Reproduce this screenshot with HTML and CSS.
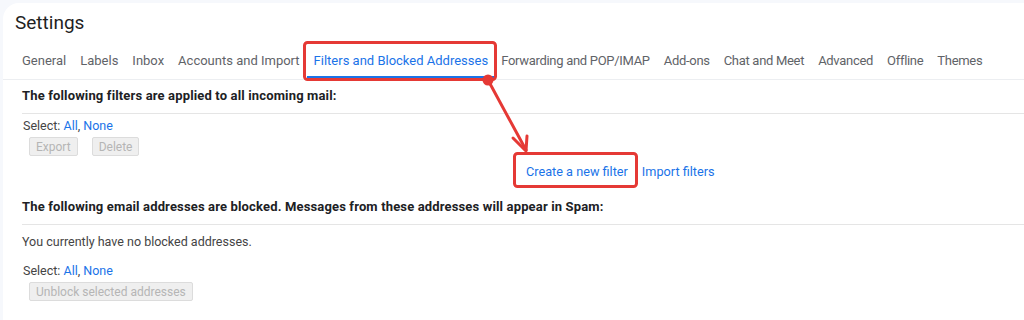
FILE: index.html
```html
<!DOCTYPE html>
<html lang="en">
<head>
    <meta charset="UTF-8">
    <meta name="viewport" content="width=device-width, initial-scale=1.0">
    <title>Settings - Filters and Blocked Addresses</title>
    <link rel="stylesheet" href="styles.css">
</head>
<body>
    <div class="page">
        <div class="panel">
            <h1 class="title">Settings</h1>
            <nav class="tabs">
                <a class="tab">General</a>
                <a class="tab">Labels</a>
                <a class="tab">Inbox</a>
                <a class="tab">Accounts and Import</a>
                <a class="tab active">Filters and Blocked Addresses</a>
                <a class="tab">Forwarding and POP/IMAP</a>
                <a class="tab">Add-ons</a>
                <a class="tab">Chat and Meet</a>
                <a class="tab">Advanced</a>
                <a class="tab">Offline</a>
                <a class="tab">Themes</a>
            </nav>

            <section class="block">
                <h2 class="block-head">The following filters are applied to all incoming mail:</h2>
                <div class="select">Select: <a>All</a>, <a>None</a></div>
                <div class="buttons">
                    <button class="btn" disabled>Export</button>
                    <button class="btn" disabled>Delete</button>
                </div>
                <div class="filter-links">
                    <a>Create a new filter</a>
                    <a>Import filters</a>
                </div>
            </section>

            <section class="block blocked">
                <h2 class="block-head">The following email addresses are blocked. Messages from these addresses will appear in Spam:</h2>
                <p class="empty">You currently have no blocked addresses.</p>
                <div class="select select-low">Select: <a>All</a>, <a>None</a></div>
                <div class="buttons">
                    <button class="btn" disabled>Unblock selected addresses</button>
                </div>
            </section>
        </div>

        <!-- red callouts drawn over the page -->
        <svg class="callouts" width="1024" height="320" viewBox="0 0 1024 320">
            <rect x="304.5" y="42.5" width="191" height="37" rx="3" />
            <rect x="514.5" y="153.5" width="122" height="33" rx="3" />
            <line x1="488" y1="80" x2="526" y2="150" />
            <polyline points="513,138 526,151 527,136" />
            <circle cx="488" cy="80" r="5.5" />
        </svg>
    </div>
</body>
</html>
```

FILE: styles.css
```css
* {
    box-sizing: border-box;
}

body {
    margin: 0;
    background: #f6f8fc;
    font-family: Roboto, "Liberation Sans", Arial, sans-serif;
    color: #202124;
}

.page {
    position: relative;
    width: 1024px;
    height: 320px;
    padding: 3px 0 0 3px;
    overflow: hidden;
}

.panel {
    background: #fff;
    border-radius: 16px 0 0 0;
    height: 100%;
}

.title {
    margin: 0;
    padding: 8px 12px 0;
    font-size: 19px;
    line-height: 24px;
    font-weight: 400;
    color: #1f1f1f;
}

.tabs {
    display: flex;
    padding: 16px 0 0 12px;
    border-bottom: 1px solid #eceef1;
}

.tab {
    padding: 0 7px 5px;
    font-size: 13px;
    line-height: 20px;
    color: #5f6368;
    white-space: nowrap;
    border-bottom: 3px solid transparent;
}

.tab.active {
    padding: 0 6px 5px 7px;
    color: #1a73e8;
    border-bottom-color: #1a73e8;
}

.tab.active ~ .tab {
    letter-spacing: -0.3px;
}

.block {
    margin-left: 19px;
}

.blocked {
    margin-top: 11px;
}

.block-head {
    margin: 0;
    padding: 7px 0 8px;
    font-size: 13px;
    line-height: 18px;
    font-weight: 700;
    letter-spacing: 0.15px;
    color: #202124;
    border-bottom: 1px solid #e5e5e5;
}

.select {
    margin-top: 4px;
    padding-left: 1px;
    font-size: 12.5px;
    line-height: 16px;
    color: #444;
}

.select a,
.filter-links a {
    color: #1a73e8;
}

.select-low {
    margin-top: 13px;
}

.buttons {
    display: flex;
    gap: 14px;
    margin-top: 3px;
    padding-left: 7px;
}

.btn {
    height: 19px;
    padding: 0 6px;
    font-family: inherit;
    font-size: 12px;
    color: #b5b5b5;
    background: #efefef;
    border: 1px solid #dcdcdc;
    border-radius: 2px;
}

.filter-links {
    display: flex;
    gap: 14px;
    margin-top: 8px;
    padding-left: 504px;
    font-size: 12.7px;
    line-height: 16px;
}

.empty {
    margin: 9px 0 0;
    font-size: 12.5px;
    line-height: 16px;
    color: #444;
}

.callouts {
    position: absolute;
    top: 0;
    left: 0;
    pointer-events: none;
    fill: none;
    stroke: #e53935;
    stroke-width: 3;
    stroke-linecap: round;
    stroke-linejoin: round;
}

.callouts circle {
    fill: #e53935;
    stroke: none;
}
```
